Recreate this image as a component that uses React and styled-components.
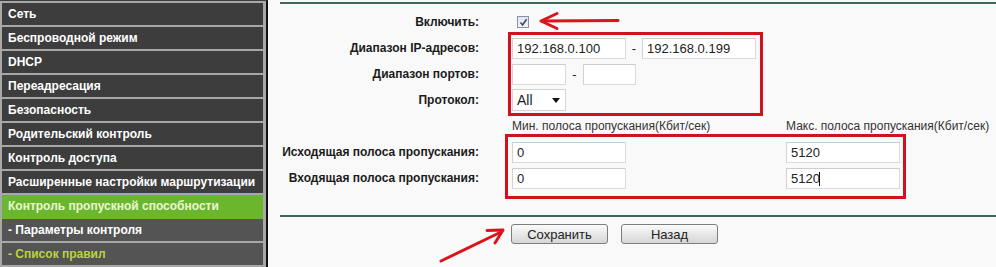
import React from "react";
import styled, { createGlobalStyle } from "styled-components";

const GlobalStyle = createGlobalStyle`
  html, body {
    margin: 0;
    padding: 0;
    background: #f9f9f9;
  }
  body {
    font-family: "Liberation Sans", Arial, sans-serif;
  }
`;

const menu = [
  { label: "Сеть", variant: "main" },
  { label: "Беспроводной режим", variant: "main" },
  { label: "DHCP", variant: "main" },
  { label: "Переадресация", variant: "main" },
  { label: "Безопасность", variant: "main" },
  { label: "Родительский контроль", variant: "main" },
  { label: "Контроль доступа", variant: "main" },
  { label: "Расширенные настройки маршрутизации", variant: "main" },
  { label: "Контроль пропускной способности", variant: "active" },
  { label: "- Параметры контроля", variant: "sub" },
  { label: "- Список правил", variant: "current" },
];

const navBg = {
  main: "#3d3d3d",
  active: "#6ab72e",
  sub: "#545454",
  current: "#545454",
};
const navColor = {
  main: "#ffffff",
  active: "#eaf8d2",
  sub: "#ffffff",
  current: "#b9d43c",
};

function App() {
  return (
    <Page>
      <GlobalStyle />
      <Sidebar>
        {menu.map((m, i) => (
          <NavItem key={i} $variant={m.variant}>
            {m.label}
          </NavItem>
        ))}
      </Sidebar>
      <Main>
        <Rule />
        <Form>
          <Group>
            <Labels>
              <Label>Включить:</Label>
            </Labels>
            <Controls>
              <Row>
                <CheckBox>
                  <svg width="9" height="9" viewBox="0 0 9 9">
                    <path d="M1.5 4.5 L3.6 7 L7.6 1.2" fill="none" stroke="#3b4a66" strokeWidth="1.6" />
                  </svg>
                </CheckBox>
              </Row>
            </Controls>
          </Group>

          <Group>
            <Labels>
              <Label>Диапазон IP-адресов:</Label>
              <Label>Диапазон портов:</Label>
              <Label>Протокол:</Label>
            </Labels>
            <Controls $mark="-3px -7px -3px -4px">
              <Row>
                <TextInput $w={114} readOnly defaultValue="192.168.0.100" />
                <Dash $w={16}>-</Dash>
                <TextInput $w={114} readOnly defaultValue="192.168.0.199" />
              </Row>
              <Row>
                <TextInput $w={54} readOnly defaultValue="" />
                <Dash $w={17}>-</Dash>
                <TextInput $w={53} readOnly defaultValue="" />
              </Row>
              <Row>
                <Select>
                  <span>All</span>
                  <svg width="8" height="5" viewBox="0 0 8 5">
                    <path d="M0 0 H8 L4 5 Z" fill="#111" />
                  </svg>
                </Select>
              </Row>
            </Controls>
          </Group>

          <Group>
            <Labels>
              <Label />
            </Labels>
            <Controls>
              <BandRow>
                <Caption>Мин. полоса пропускания(Кбит/сек)</Caption>
                <Caption>Макс. полоса пропускания(Кбит/сек)</Caption>
              </BandRow>
            </Controls>
          </Group>

          <Group>
            <Labels>
              <Label>Исходящая полоса пропускания:</Label>
              <Label>Входящая полоса пропускания:</Label>
            </Labels>
            <Controls $mark="-5px -6px -8px -7px">
              <BandRow>
                <TextInput $w={114} readOnly defaultValue="0" />
                <TextInput $w={114} readOnly defaultValue="5120" />
              </BandRow>
              <BandRow>
                <TextInput $w={114} readOnly defaultValue="0" />
                <CaretWrap>
                  <TextInput $w={114} readOnly defaultValue="5120" />
                  <Caret />
                </CaretWrap>
              </BandRow>
            </Controls>
          </Group>
        </Form>
        <Rule $top={24} />
        <Buttons>
          <Button>Сохранить</Button>
          <Button>Назад</Button>
        </Buttons>
      </Main>

      <Annotations width="996" height="267" viewBox="0 0 996 267">
        <g stroke="#d8141c" strokeWidth="3" fill="none" strokeLinecap="round" strokeLinejoin="round">
          <path d="M618 20.5 L543 21" />
          <path d="M557 13.5 L541 21 L557 28.5" />
          <path d="M441 261 L500 232.5" />
          <path d="M487 230.5 L503 230 L495 243" />
        </g>
      </Annotations>
    </Page>
  );
}

const Page = styled.div`
  position: relative;
  display: flex;
  width: 996px;
  height: 267px;
  overflow: hidden;
  background: #f9f9f9;
`;

const Sidebar = styled.div`
  width: 268px;
  flex-shrink: 0;
  box-sizing: border-box;
  background: #a8a8a8;
  border-top: 1px solid #3d3d3d;
  border-right: 2px solid #111;
  padding: 2px 3px 0 2px;
  display: flex;
  flex-direction: column;
`;

const NavItem = styled.div`
  height: ${(p) => (p.$variant === "active" ? "24px" : "22px")};
  line-height: 22px;
  margin-bottom: ${(p) => (p.$variant === "active" ? "0" : "2px")};
  padding-left: 6px;
  background: ${(p) => navBg[p.$variant]};
  color: ${(p) => navColor[p.$variant]};
  font-size: 12px;
  font-weight: bold;
  white-space: nowrap;
  flex-shrink: 0;
`;

const Main = styled.div`
  flex: 1;
  padding: 2px 0 0 12px;
  display: flex;
  flex-direction: column;
`;

const Rule = styled.div`
  height: 2px;
  margin-top: ${(p) => p.$top || 0}px;
  background: #3e6a5b;
  flex-shrink: 0;
`;

const Form = styled.div`
  margin-top: 5px;
  display: flex;
  flex-direction: column;
`;

const Group = styled.div`
  display: flex;
  align-items: flex-start;
`;

const Labels = styled.div`
  width: 199px;
  flex-shrink: 0;
  display: flex;
  flex-direction: column;
`;

const Label = styled.div`
  height: 26px;
  line-height: 26px;
  text-align: right;
  font-size: 12px;
  font-weight: bold;
  color: #1b1b1b;
  white-space: nowrap;
`;

const Controls = styled.div`
  position: relative;
  margin-left: 33px;
  display: flex;
  flex-direction: column;

  &::after {
    content: "";
    display: ${(p) => (p.$mark ? "block" : "none")};
    position: absolute;
    inset: ${(p) => p.$mark || "0"};
    border: 3px solid #d0121c;
    pointer-events: none;
  }
`;

const Row = styled.div`
  height: 26px;
  display: flex;
  align-items: center;
`;

const BandRow = styled.div`
  height: 26px;
  display: grid;
  grid-template-columns: 274px 114px;
  align-items: center;
`;

const TextInput = styled.input`
  box-sizing: border-box;
  width: ${(p) => p.$w}px;
  height: 21px;
  margin: 0;
  padding: 0 4px;
  border: 1px solid #dadada;
  border-top-color: #cdcdcd;
  border-left-color: #d2d2d2;
  background: #fff;
  font-family: "Liberation Sans", Arial, sans-serif;
  font-size: 13px;
  color: #222;
  outline: none;
`;

const Dash = styled.span`
  width: ${(p) => p.$w}px;
  text-align: center;
  font-size: 13px;
  color: #222;
`;

const CheckBox = styled.div`
  box-sizing: border-box;
  width: 12px;
  height: 12px;
  margin-left: 5px;
  border: 1px solid #8493aa;
  background: linear-gradient(#dfe5ee, #f3f5f9);
  display: flex;
  align-items: center;
  justify-content: center;
`;

const Select = styled.div`
  box-sizing: border-box;
  width: 54px;
  height: 22px;
  padding: 0 5px 0 4px;
  border: 1px solid #d4d4d4;
  background: #fff;
  display: flex;
  align-items: center;
  justify-content: space-between;
  font-size: 14px;
  color: #222;
`;

const Caption = styled.span`
  font-size: 12px;
  color: #333;
  white-space: nowrap;
`;

const CaretWrap = styled.div`
  position: relative;
  display: flex;
`;

const Caret = styled.span`
  position: absolute;
  left: 33px;
  top: 4px;
  width: 1px;
  height: 14px;
  background: #111;
`;

const Buttons = styled.div`
  margin-top: 7px;
  padding-left: 231px;
  display: flex;
  gap: 13px;
`;

const Button = styled.button`
  box-sizing: border-box;
  width: 97px;
  height: 20px;
  padding: 0;
  border: 1px solid #7d7d7d;
  border-radius: 3px;
  background: linear-gradient(#fbfbfb, #e6e6e6 55%, #d6d6d6);
  font-family: "Liberation Sans", Arial, sans-serif;
  font-size: 13px;
  color: #222;
`;

const Annotations = styled.svg`
  position: absolute;
  left: 0;
  top: 0;
  pointer-events: none;
`;

export default App;
